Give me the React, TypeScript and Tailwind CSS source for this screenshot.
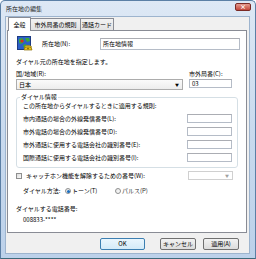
import React from "react";

function TextInput({ w, h = 9, value }: { w: number; h?: number; value?: string }) {
  return (
    <div
      className="bg-white border border-[#b5bcc7] border-t-[#abadb3] flex items-center pl-[2px] shrink-0"
      style={{ width: w, height: h }}
    >
      {value}
    </div>
  );
}

function Radio({ checked }: { checked?: boolean }) {
  return (
    <div className="w-[6px] h-[6px] rounded-full border border-[#8e8f8f] bg-gradient-to-br from-[#e6e6e6] to-white flex items-center justify-center shrink-0">
      {checked && <div className="w-[3px] h-[3px] rounded-full bg-[#1b6fc0]" />}
    </div>
  );
}

function Icon() {
  return (
    <svg width="16" height="16" viewBox="0 0 16 16" className="shrink-0">
      <rect x="0.5" y="0.5" width="13" height="13" fill="#2c60c9" stroke="#1b3a82" />
      <path d="M2 3 L5 2 L7 4 L6 7 L3 8 L2 6 Z" fill="#3aa83a" />
      <path d="M8 2 L12 2 L13 5 L10 6 L9 4 Z" fill="#3aa83a" />
      <path d="M6 9 L9 8 L10 11 L7 12 Z" fill="#3aa83a" />
      <circle cx="5" cy="5" r="1.6" fill="#d62c1f" />
      <path d="M7 14 Q7 10 11 10 Q15 10 15 14 Z" fill="#e8c21c" stroke="#8a6d08" strokeWidth="0.7" />
      <path d="M7.5 10.5 Q11 8 14.5 10.5 L14 11.5 Q11 10 8 11.5 Z" fill="#f1d23a" stroke="#8a6d08" strokeWidth="0.6" />
      <circle cx="11" cy="12.5" r="1" fill="#8a6d08" />
    </svg>
  );
}

export default function App() {
  return (
    <div className="w-[256px] h-[259px] flex flex-col bg-gradient-to-b from-[#dde8f5] via-[#c9daee] to-[#bcd1ea] border border-[#5b7fa5] border-b-[#3d6a7a] rounded-t-[5px] text-[6px] leading-[8px] text-black font-['Noto_Sans_CJK_JP','Noto_Sans',sans-serif] overflow-hidden">
      <div className="h-[15px] flex items-center justify-between pl-[5px] pr-[4px] shrink-0">
        <span className="text-[#1a1a1a]">所在地の編集</span>
        <div className="w-[16px] h-[8px] mb-[3px] rounded-[2px] border border-[#7a2a25] bg-gradient-to-b from-[#e49a8e] to-[#c2453a] flex items-center justify-center text-white text-[6px] leading-[6px] font-bold">
          ×
        </div>
      </div>
      <div className="flex-1 ml-[4px] mr-[5px] mb-[4px] bg-[#f0f0f0] border border-[#9db4ce] flex flex-col pl-[1px] pr-[2px]">
        {/* Tabs */}
        <div className="flex items-end h-[13px] pl-[1px] shrink-0 relative z-10">
          <div className="h-[14px] w-[23px] bg-white border border-[#898c95] border-b-0 flex items-center justify-center mb-[-1px] rounded-t-[1px]">
            全般
          </div>
          <div className="h-[12px] w-[50px] border border-[#898c95] border-b-0 border-l-0 bg-gradient-to-b from-[#f2f2f2] to-[#e3e3e3] flex items-center justify-center">
            市外局番の規則
          </div>
          <div className="h-[12px] w-[33px] border border-[#898c95] border-b-0 border-l-0 bg-gradient-to-b from-[#f2f2f2] to-[#e3e3e3] flex items-center justify-center">
            通話カード
          </div>
        </div>
        {/* Panel */}
        <div className="h-[203px] bg-white border border-[#898c95] flex flex-col pl-[8px] shrink-0">
          <div className="flex items-center mt-[5px] h-[16px]">
            <div className="ml-[1px] w-[25px]">
              <Icon />
            </div>
            <span className="w-[58px]">所在地(N):</span>
            <TextInput w={140} h={12} value="所在地情報" />
          </div>
          <div className="mt-[6px]">ダイヤル元の所在地を指定します。</div>
          <div className="flex mt-[4px]">
            <div className="flex flex-col w-[167px]">
              <span>国/地域(R):</span>
              <div className="mt-[1px] h-[11px] border border-[#acacac] bg-gradient-to-b from-[#fafafa] to-[#ededed] flex items-center justify-between pl-[2px] pr-[3px]">
                <span>日本</span>
                <span className="text-[4px] leading-[4px]">▼</span>
              </div>
            </div>
            <div className="flex flex-col ml-[6px]">
              <span>市外局番(C):</span>
              <div className="mt-[1px]">
                <TextInput w={43} value="03" />
              </div>
            </div>
          </div>
          <fieldset className="w-[222px] mt-[3px] border border-[#d5dfe5] rounded-[3px] pl-[6px] pr-[5px] pb-[5px]">
            <legend className="ml-[-3px] px-[1px]">ダイヤル情報</legend>
            <div className="mt-[1px]">この所在地からダイヤルするときに適用する規則:</div>
            <div className="flex flex-col gap-[4px] mt-[4px]">
              {[
                "市内通話の場合の外線発信番号(L):",
                "市外電話の場合の外線発信番号(D):",
                "市外通話に使用する電話会社の識別番号(E):",
                "国際通話に使用する電話会社の識別番号(I):",
              ].map((t) => (
                <div key={t} className="flex items-center justify-between h-[9px]">
                  <span>{t}</span>
                  <TextInput w={45} />
                </div>
              ))}
            </div>
          </fieldset>
          <div className="flex items-center mt-[3px] h-[9px]">
            <div className="w-[6px] h-[6px] border border-[#8e8f8f] bg-gradient-to-br from-[#dcdcdc] to-[#fafafa]" />
            <span className="ml-[4px] w-[162px]">キャッチホン機能を解除するための番号(W):</span>
            <div className="w-[45px] h-[9px] border border-[#d0d0d0] bg-white flex items-center justify-end pr-[3px] text-[#a0a0a0] text-[4px]">
              ▼
            </div>
          </div>
          <div className="flex items-center mt-[7px] pl-[7px]">
            <span className="w-[42px]">ダイヤル方法:</span>
            <Radio checked />
            <span className="ml-[1px] w-[43px]">トーン(T)</span>
            <Radio />
            <span className="ml-[1px] text-[#333]">パルス(P)</span>
          </div>
          <div className="mt-[10px]">ダイヤルする電話番号:</div>
          <div className="mt-[3px] pl-[7px]">008833-****</div>
        </div>
        {/* Buttons */}
        <div className="flex justify-end mt-[5px] pr-[8px]">
          <div className="w-[45px] h-[12px] rounded-[2px] border border-[#3c7fb1] bg-gradient-to-b from-[#eaf6fd] to-[#d4ebf8] flex items-center justify-center">
            OK
          </div>
          <div className="ml-[15px] w-[36px] h-[12px] rounded-[2px] border border-[#707070] bg-gradient-to-b from-[#f2f2f2] to-[#dcdcdc] flex items-center justify-center">
            キャンセル
          </div>
          <div className="ml-[7px] w-[36px] h-[12px] rounded-[2px] border border-[#707070] bg-gradient-to-b from-[#f2f2f2] to-[#dcdcdc] flex items-center justify-center">
            適用(A)
          </div>
        </div>
      </div>
    </div>
  );
}
